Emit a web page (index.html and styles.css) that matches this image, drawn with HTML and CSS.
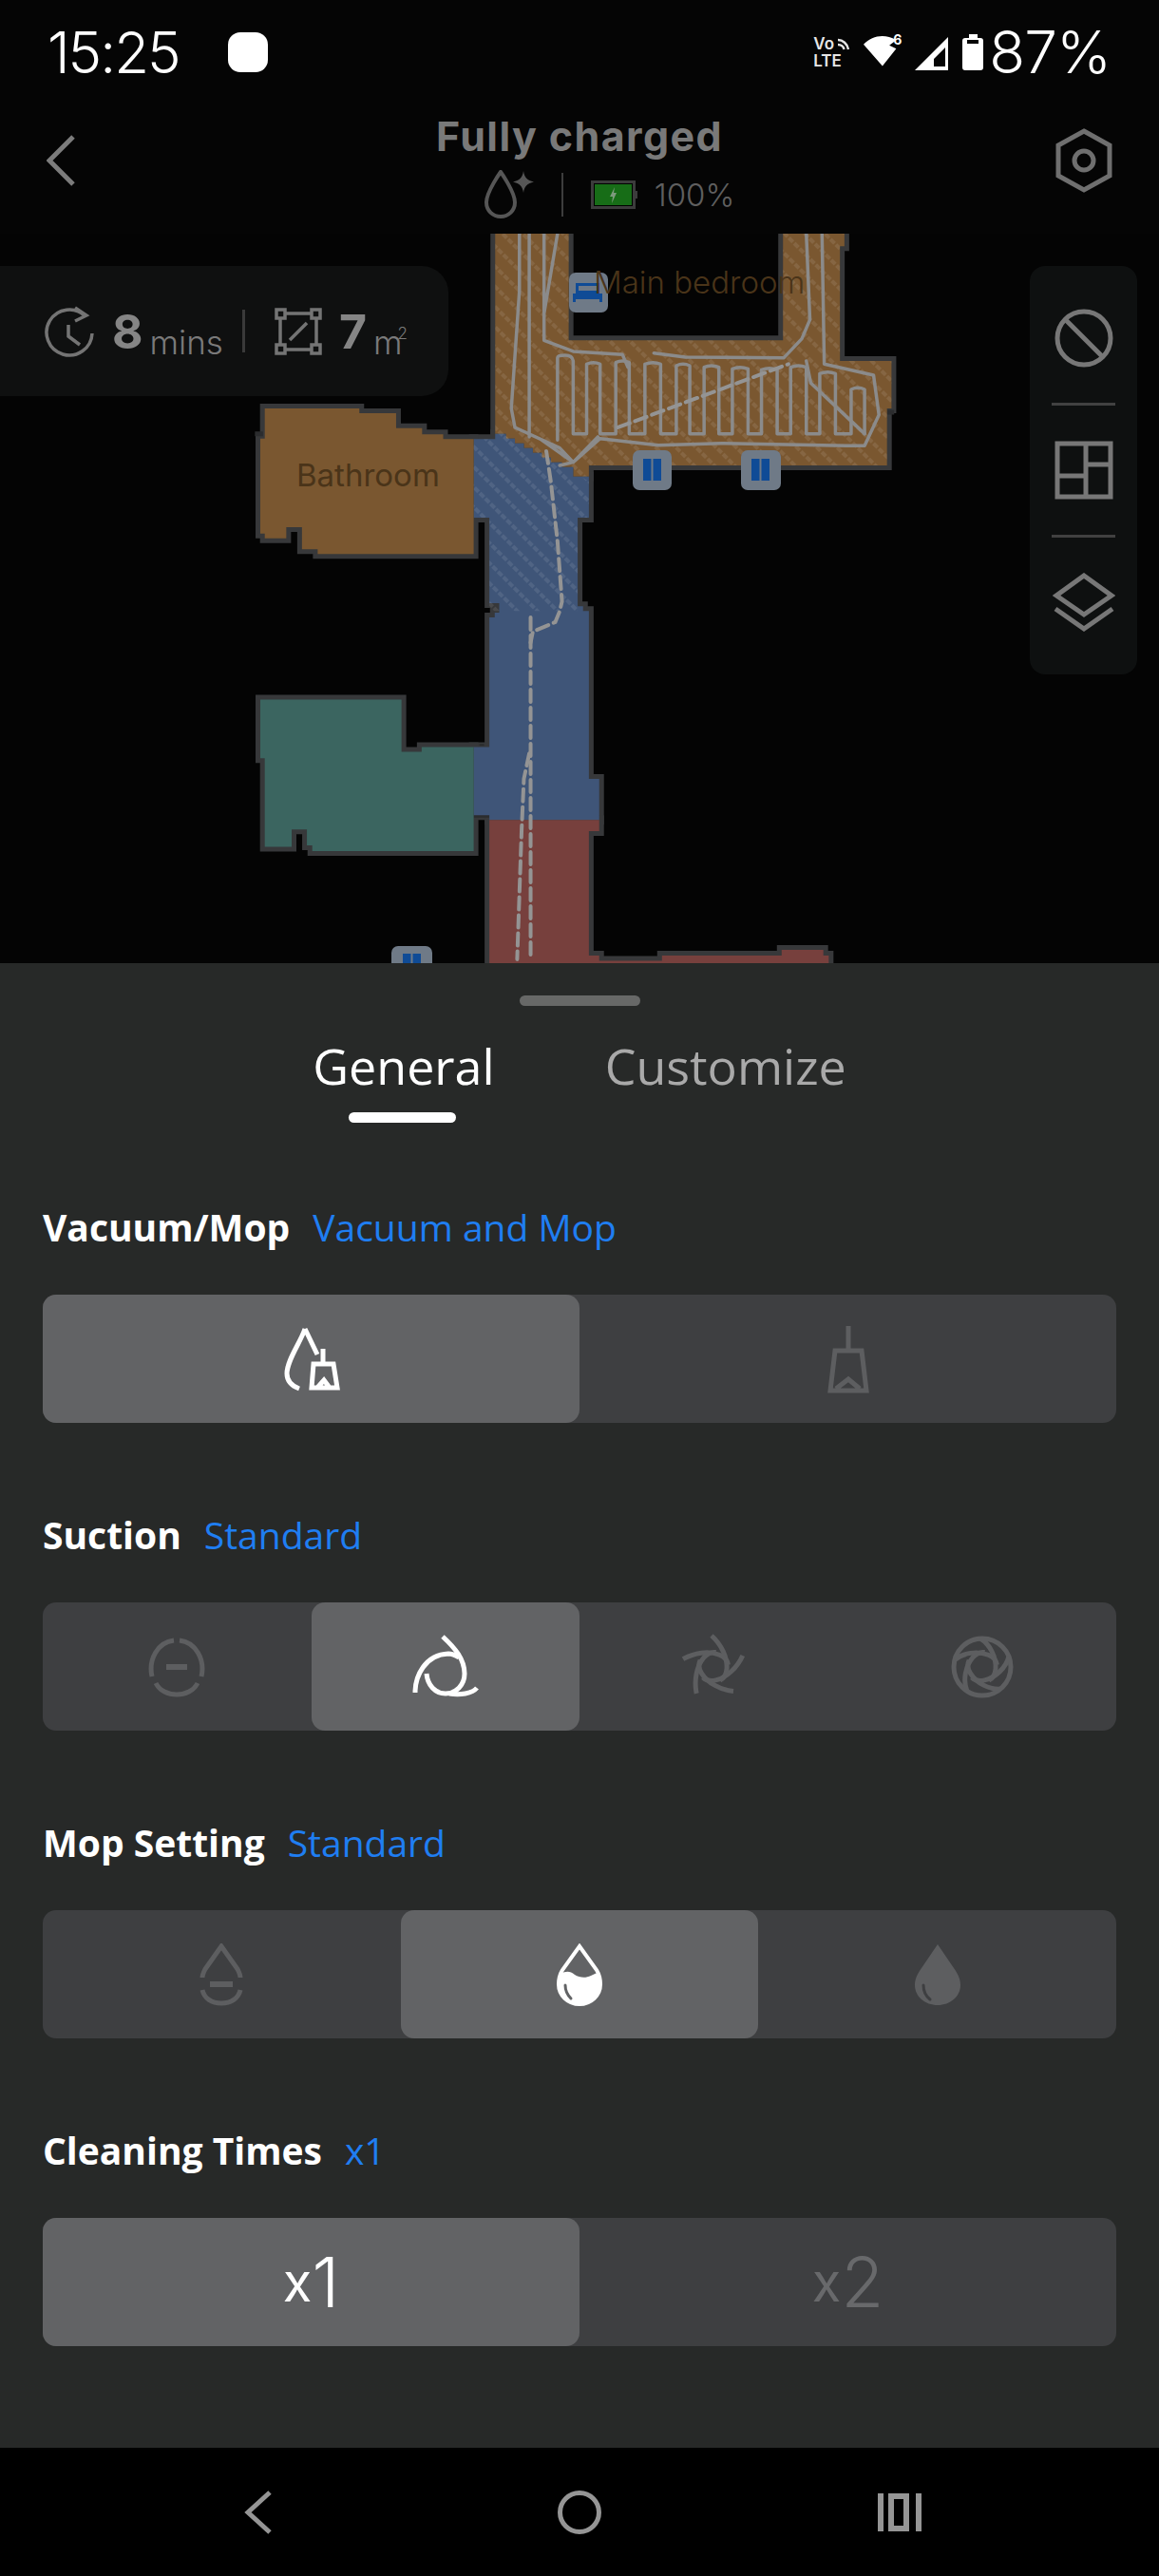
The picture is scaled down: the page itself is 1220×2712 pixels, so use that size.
FILE: index.html
```html
<!DOCTYPE html>
<html lang="en">
<head>
<meta charset="utf-8">
<title>Clean settings</title>
<link rel="stylesheet" href="styles.css">
</head>
<body>
<div class="screen">
  <div class="status">
    <div class="status-left">
      <span class="clock">15:25</span>
      <span class="notif"></span>
    </div>
    <div class="status-right">
      <div class="volte">
        <span class="vo">Vo</span>
        <svg class="volte-waves" viewBox="0 0 14 14"><path d="M1 3 C6 3 11 7 12 13 M1 8 C4 8 7 10 7.5 13"/></svg>
        <span class="lte">LTE</span>
      </div>
      <svg class="wifi" viewBox="0 0 42 38"><path class="solid" d="M0 11 C10 1 24 -2 38 6 L30 12 L38 16 L22 36 Z"/></svg>
      <span class="wifi6">6</span>
      <svg class="signal" viewBox="0 0 36 35"><path class="solid" fill-rule="evenodd" d="M0 35 L35 0 V35 Z M20 31 H32 V11 L20 23 Z"/></svg>
      <svg class="battery" viewBox="0 0 22 38"><path class="solid" fill-rule="evenodd" d="M7 0 H16 V4 H19 Q22 4 22 7 V35 Q22 38 19 38 H3 Q0 38 0 35 V7 Q0 4 3 4 H7 Z M5 6 V10 H17 V6 Z"/></svg>
      <span class="pct">87%</span>
    </div>
  </div>

  <header class="header">
    <svg class="back" viewBox="0 0 30 54"><path d="M28 2 L3 27 L28 52"/></svg>
    <div class="header-mid">
      <div class="title">Fully charged</div>
      <div class="sub">
        <svg class="drop-spark" viewBox="0 0 54 52">
          <path class="dim-stroke" d="M18 2 C18 2 3 23 3 34 C3 43 10 49 18 49 C26 49 33 43 33 34 C33 23 18 2 18 2 Z"/>
          <path class="dim-fill" d="M42 1 C43 8 46 11 53 12.500 C46 14 43 17 42 24 C41 17 38 14 31 12.500 C38 11 41 8 42 1 Z"/>
        </svg>
        <span class="sub-div"></span>
        <svg class="batt-green" viewBox="0 0 50 30">
          <rect class="batt-shell" x="1.500" y="1.500" width="44" height="27"/>
          <rect class="batt-level" x="4" y="4" width="39" height="22"/>
          <path class="batt-bolt" d="M25 7 L20 17 H23 L22 24 L27 13 H24 Z"/>
          <rect class="batt-nub" x="46" y="11" width="3" height="8"/>
        </svg>
        <span class="sub-pct">100%</span>
      </div>
    </div>
    <svg class="hex" viewBox="0 0 60 68">
      <path d="M30 3 L57 18 V50 L30 65 L3 50 V18 Z"/>
      <circle cx="30" cy="34" r="10"/>
    </svg>
  </header>

  <main class="map">
    <svg class="map-art" viewBox="0 246 1220 768">
      <defs>
        <pattern id="clean" patternUnits="userSpaceOnUse" width="8" height="15" patternTransform="scale(2.119 3) rotate(45)">
          <rect class="clean-dot" x="0" y="0" width="6" height="4"/>
        </pattern>
        <path id="r-orange" class="room-shape" d="M596 -20 V680 H620 V695 H640 V710 H660 V725 H680 V740 H700 V755 H720 V770 H745 V785 H770 V815 H805 V780 H1470 V600 H1480 V450 H1365 V88 H1375 V-20 H1238 V385 H760 V-20 Z"/>
        <path id="r-blue" class="room-shape" d="M548 697 H596 V680 H620 V695 H640 V710 H660 V725 H680 V740 H700 V755 H720 V770 H745 V785 H770 V815 H805 V945 H780 V1225 H792 V1240 H805 V1770 H828 V1900 H583 V1885 H548 V1670 H583 V1260 H595 V1245 H605 V1215 H583 V945 H548 Z"/>
        <path id="r-bath" class="room-shape" d="M82 600 H293 V615 H375 V662 H433 V682 H480 V697 H548 V1060 H200 V1045 H165 V975 H130 V1010 H82 V995 H72 V695 H82 Z"/>
        <path id="r-teal" class="room-shape" d="M72 1520 H387 V1685 H432 V1670 H548 V1998 H188 V1980 H176 V1930 H142 V1985 H82 V1705 H72 Z"/>
        <path id="r-red" class="room-shape" d="M583 1900 H828 V1935 H805 V2328 H828 V2345 H968 V2328 H1235 V2310 H1328 V2328 H1340 V2380 H583 Z"/>
      </defs>
      <g transform="translate(240 230) scale(.4719 .3333)">
        <use class="wall" href="#r-orange"/>
        <use class="wall" href="#r-blue"/>
        <use class="wall" href="#r-bath"/>
        <use class="wall" href="#r-teal"/>
        <use class="wall" href="#r-red"/>
        <path class="wall-bit" d="M754 320 V360 M1206 385 V415 M1470 612 H1486 M60 680 H78 M566 1660 V1666 M548 1885 H583"/>
        <use class="room-orange" href="#r-orange"/>
        <use class="room-blue" href="#r-blue"/>
        <use class="room-bath" href="#r-bath"/>
        <use class="room-teal" href="#r-teal"/>
        <use class="room-red" href="#r-red"/>
        <use class="room-clean" href="#r-orange"/>
        <path class="room-clean" d="M548 697 H596 V680 H620 L805 830 V945 H780 V1240 H583 V945 H548 Z"/>
        <path class="track" d="M650 48 V230 L632 600 L640 660 L740 725 L770 770 L825 690 M672 48 V690 M705 48 V380 M735 48 L705 300 V385 L770 420 L880 430 L892 470 M950 425 L1020 438 L1240 440 L1280 380 L1298 320 L1290 48 M1325 48 L1330 460 L1440 495 L1452 620 L1420 718 H1380 L1100 710 L960 716 L830 695 L770 770 L740 780 M1290 450 L1300 520 L1420 680 M700 700 L770 770"/>
        <path class="track" d="M735 700 V440 Q735 432 752 432 Q768 432 770 450 V680 H800 V460 Q815 450 830 460 V680 H865 V455 Q880 445 895 455 V680 H930 V460 Q948 450 965 460 V680 H1000 V465 Q1015 455 1030 465 V680 H1062 V470 Q1078 460 1095 470 V680 H1125 V475 Q1142 465 1160 475 V680 H1190 V478 Q1208 468 1225 478 V680 H1255 V470 Q1272 460 1290 470 V680 H1320 V490 Q1338 480 1355 490 V680 H1390 V540 Q1405 530 1420 540 V680"/>
        <path class="track-dash" d="M870 660 L1250 460"/>
        <path class="track-dash" d="M710 735 L720 830 L735 1020 L745 1210 L740 1240 L730 1275 L680 1305 L675 1340"/>
        <path class="track-dash" d="M675 1260 V2340"/>
        <path class="track-dash" d="M672 1690 L660 1770 L655 1930 L645 2340"/>
      </g>
      <rect class="marker" x="599" y="287" width="41" height="42" rx="7"/>
      <path class="marker-ico" fill-rule="evenodd" d="M603 318 V309 H606 V298 H631 V309 H634 V318 H631 V315 H606 V318 Z M609 301 V306 H628 V301 Z"/>
      <rect class="marker" x="666" y="474" width="41" height="42" rx="7"/>
      <path class="marker-ico" d="M677 483 H685.500 V506 H677 Z M687.500 483 H696 V506 H687.500 Z"/>
      <rect class="marker" x="780" y="474" width="42" height="42" rx="7"/>
      <path class="marker-ico" d="M791 483 H799.500 V506 H791 Z M801.500 483 H810 V506 H801.500 Z"/>
      <rect class="marker" x="412" y="996" width="43" height="42" rx="7"/>
      <path class="marker-ico" d="M424 1004 H432.500 V1030 H424 Z M434.500 1004 H443 V1030 H434.500 Z"/>
      <text class="room-label label-main" x="625" y="309">Main bedroom</text>
      <text class="room-label label-bath" x="312" y="512">Bathroom</text>
    </svg>

    <div class="stats">
      <svg class="stat-ico" viewBox="0 0 54 56">
        <path d="M44 12 A24 24 0 1 0 51 30"/>
        <path d="M33 3 L45 11 L33 17 M26 21 V33 L38 42"/>
      </svg>
      <span class="stat-num">8</span>
      <span class="stat-unit">mins</span>
      <span class="stat-div"></span>
      <svg class="stat-ico area" viewBox="0 0 50 50">
        <rect class="thin" x="6" y="6" width="38" height="38"/>
        <path class="thin" d="M16 34 L34 16"/>
        <rect class="corner" x="2" y="2" width="9" height="9"/>
        <rect class="corner" x="39" y="2" width="9" height="9"/>
        <rect class="corner" x="2" y="39" width="9" height="9"/>
        <rect class="corner" x="39" y="39" width="9" height="9"/>
      </svg>
      <span class="stat-num">7</span>
      <span class="stat-unit">m<sup class="sq">2</sup></span>
    </div>

    <div class="tools">
      <svg class="tool" viewBox="0 0 62 62"><circle cx="31" cy="31" r="28"/><path d="M12 12 L50 50"/></svg>
      <span class="tool-div"></span>
      <svg class="tool" viewBox="0 0 62 62"><path d="M3 3 H59 V59 H3 Z M33 3 V59 M3 37 H33 M33 25 H59"/></svg>
      <span class="tool-div"></span>
      <svg class="tool" viewBox="0 0 66 62"><path d="M33 3 L62 24 L33 44 L4 24 Z M3 38 L33 59 L63 38"/></svg>
    </div>
  </main>

  <section class="panel">
    <div class="handle"></div>
    <div class="tabs">
      <div class="tab active">General<span class="tab-bar"></span></div>
      <div class="tab">Customize</div>
    </div>

    <div class="group">
      <div class="label">Vacuum/Mop<span class="value">Vacuum and Mop</span></div>
      <div class="seg">
        <div class="opt on">
          <svg class="ico-white" width="60" height="70" viewBox="0 0 60 70">
            <path d="M23 3 C18 18 4 36 4 50 C4 58 9 63 17 66 M23 3 L36 30"/>
            <path d="M42 24 V40 M32 40 H53 L57 65 H30 Z M36 65 L43 57 L49 65"/>
          </svg>
        </div>
        <div class="opt">
          <svg class="ico-dim" width="50" height="74" viewBox="0 0 50 74">
            <path d="M25 2 V28 M11 28 H39 L44 70 H6 Z M12 68 L25 58 L37 68"/>
          </svg>
        </div>
      </div>
    </div>

    <div class="group">
      <div class="label">Suction<span class="value">Standard</span></div>
      <div class="seg">
        <div class="opt">
          <svg class="ico-dim" width="70" height="70" viewBox="-35 -35 70 70">
            <path d="M-3 -28 C-20 -26 -30 -8 -26 10 M3 -28 C20 -26 30 -8 26 10 M-22 17 C-14 33 14 33 22 17"/>
            <rect class="ico-fill" x="-11" y="-3" width="22" height="6"/>
          </svg>
        </div>
        <div class="opt on">
          <svg class="ico-white" width="80" height="80" viewBox="-40 -40 80 80">
            <path d="M-3 -32 C10 -20 20 -8 20 7 C20 19 11 28 0 28 C-11 28 -19 19 -20 7"/>
            <path d="M-32 27 C-32 10 -22 -13 3 -14 C8 -14 11 -12 14 -10"/>
            <path d="M33 22 C28 28 15 30 4 28"/>
          </svg>
        </div>
        <div class="opt">
          <svg class="ico-dim" width="80" height="80" viewBox="-40 -40 80 80">
            <path d="M-2 -33 C8 -24 15 -10 14 2 C13.500 8 11 12 7 14"/>
            <path transform="rotate(72)" d="M-2 -33 C8 -24 15 -10 14 2 C13.500 8 11 12 7 14"/>
            <path transform="rotate(144)" d="M-2 -33 C8 -24 15 -10 14 2 C13.500 8 11 12 7 14"/>
            <path transform="rotate(216)" d="M-2 -33 C8 -24 15 -10 14 2 C13.500 8 11 12 7 14"/>
            <path transform="rotate(288)" d="M-2 -33 C8 -24 15 -10 14 2 C13.500 8 11 12 7 14"/>
          </svg>
        </div>
        <div class="opt">
          <svg class="ico-dim" width="80" height="80" viewBox="-40 -40 80 80">
            <circle r="30"/>
            <path d="M-2 -30 C8 -24 15 -10 14 2 C13.500 8 11 12 7 14"/>
            <path transform="rotate(72)" d="M-2 -30 C8 -24 15 -10 14 2 C13.500 8 11 12 7 14"/>
            <path transform="rotate(144)" d="M-2 -30 C8 -24 15 -10 14 2 C13.500 8 11 12 7 14"/>
            <path transform="rotate(216)" d="M-2 -30 C8 -24 15 -10 14 2 C13.500 8 11 12 7 14"/>
            <path transform="rotate(288)" d="M-2 -30 C8 -24 15 -10 14 2 C13.500 8 11 12 7 14"/>
          </svg>
        </div>
      </div>
    </div>

    <div class="group">
      <div class="label">Mop Setting<span class="value">Standard</span></div>
      <div class="seg">
        <div class="opt">
          <svg class="ico-dim thin-ico" width="48" height="66" viewBox="0 0 48 66">
            <path d="M4 36 C4 34 5 31 7 27 L24 3 L41 27 C43 31 44 34 44 36 M4 49 C6 58 14 63 24 63 C34 63 42 58 44 49"/>
            <rect class="ico-fill" x="12" y="40" width="24" height="6"/>
          </svg>
        </div>
        <div class="opt on">
          <svg width="48" height="66" viewBox="0 0 48 66">
            <path class="drop-line" d="M24 3 L42 28 C45 33 46 38 46 43 C46 55 36 64 24 64 C12 64 2 55 2 43 C2 38 3 33 6 28 Z"/>
            <path class="drop-solid" d="M4 32 C10 29 14 29 19 33 C24 36 30 37 36 34 C40 32 42 31 44 31 C47 36 47 40 47 43 C47 56 36 65 24 65 C12 65 1 56 1 43 C1 39 2 36 4 32 Z"/>
            <path class="drop-shine" d="M9 44 C9 50 11 54 15 58"/>
          </svg>
        </div>
        <div class="opt">
          <svg width="50" height="66" viewBox="0 0 50 66">
            <path class="drop-dim" d="M25 1 L42 26 C47 33 49 38 49 44 C49 56 38 65 25 65 C12 65 1 56 1 44 C1 38 3 33 8 26 Z"/>
            <path class="drop-shine-dark" d="M10 44 C10 50 12 55 17 59"/>
          </svg>
        </div>
      </div>
    </div>

    <div class="group">
      <div class="label">Cleaning Times<span class="value">x1</span></div>
      <div class="seg">
        <div class="opt on times"><span class="times-x">x</span>1</div>
        <div class="opt times"><span class="times-x">x</span>2</div>
      </div>
    </div>
  </section>

  <nav class="navbar">
    <svg class="nav-back" viewBox="0 0 30 46"><path d="M27 2 L4 23 L27 44"/></svg>
    <svg class="nav-home" viewBox="0 0 46 46"><circle cx="23" cy="23" r="20.500"/></svg>
    <svg class="nav-recent" viewBox="0 0 46 40"><path class="solid-grey" fill-rule="evenodd" d="M0 0 H6 V40 H0 Z M40 0 H46 V40 H40 Z M11 0 H33 V40 H11 Z M17 6 V34 H27 V6 Z"/></svg>
  </nav>
</div>
</body>
</html>
```
FILE: styles.css
```css
* { box-sizing: border-box; }
html, body { margin: 0; padding: 0; background: #000; }
svg { display: block; flex: none; }

.screen {
  width: 1220px;
  height: 2712px;
  display: flex;
  flex-direction: column;
  overflow: hidden;
  background: #050505;
  font-family: "Open Sans", sans-serif;
}

/* status bar */
.status {
  height: 110px;
  flex: none;
  padding: 20px 51px 0 50px;
  display: flex;
  justify-content: space-between;
  align-items: flex-start;
  color: #fff;
  font-family: Inter, sans-serif;
  font-weight: 300;
}
.status-left { display: flex; align-items: center; gap: 51px; }
.clock { font-size: 60px; line-height: 70px; letter-spacing: -2px; }
.notif { width: 42px; height: 42px; border-radius: 13px; background: #fff; }
.status-right { display: flex; align-items: center; position: relative; height: 70px; }
.volte { width: 40px; height: 36px; position: relative; font-size: 17px; font-weight: 600; line-height: 17px; color: #e6e6e6; margin-right: 13px; }
.vo { position: absolute; left: 0; top: 1px; }
.lte { position: absolute; left: 0; top: 19px; }
.volte-waves { position: absolute; left: 25px; top: 2px; width: 14px; height: 14px; fill: none; stroke: #e6e6e6; stroke-width: 2.500; }
.wifi { width: 38px; height: 36px; margin-top: -2px; }
.solid { fill: #fff; }
.wifi6 { font-size: 14px; font-weight: 700; width: 17px; margin-top: -26px; margin-left: -7px; line-height: 14px; }
.signal { width: 36px; height: 35px; margin-left: 6px; margin-top: 2px; }
.battery { width: 22px; height: 38px; margin-left: 14px; }
.pct { font-size: 62px; line-height: 70px; margin-left: 6px; letter-spacing: -1px; }

/* header */
.header {
  height: 136px;
  flex: none;
  padding: 0 49px;
  display: grid;
  grid-template-columns: 60px 1fr 60px;
  align-items: start;
}
.back { width: 30px; height: 54px; margin-top: 32px; fill: none; stroke: #7c7c7c; stroke-width: 5; }
.hex { width: 60px; height: 68px; margin-top: 25px; fill: none; stroke: #6f6f6f; stroke-width: 5; }
.header-mid { display: flex; flex-direction: column; align-items: center; }
.title { font-family: Inter, sans-serif; font-weight: 700; font-size: 43px; line-height: 52px; margin-top: 7px; color: #797979; letter-spacing: 1.400px; }
.sub { display: flex; align-items: center; margin-top: 10px; margin-left: 62px; }
.drop-spark { width: 54px; height: 52px; }
.dim-stroke { fill: none; stroke: #565656; stroke-width: 4; }
.dim-fill { fill: #565656; }
.sub-div { width: 2px; height: 46px; background: #3d3d3d; margin: 0 29px 0 28px; }
.batt-green { width: 50px; height: 30px; }
.batt-shell { fill: #000; stroke: #3c3c3c; stroke-width: 3; }
.batt-level { fill: #176d17; }
.batt-bolt { fill: #7d9a7d; }
.batt-nub { fill: #3c3c3c; }
.sub-pct { font-family: Inter, sans-serif; font-weight: 300; font-size: 33px; line-height: 40px; color: #5f5f5f; margin-left: 17px; }

/* map */
.map { position: relative; height: 768px; flex: none; background: #040404; }
.map-art { width: 1220px; height: 768px; }
.room-shape { vector-effect: non-scaling-stroke; }
.wall { fill: #37383a; stroke: #37383a; stroke-width: 10; }
.wall-bit { fill: none; stroke: #2b2c2e; stroke-width: 5; vector-effect: non-scaling-stroke; }
.room-orange, .room-bath { fill: #7a5730; }
.room-blue { fill: #3f5578; }
.room-teal { fill: #3b6560; }
.room-red { fill: #77403d; }
.room-clean { fill: url(#clean); }
.clean-dot { fill: #fff; fill-opacity: .09; }
.track { fill: none; stroke: #8b8b8b; stroke-width: 3.500; stroke-linejoin: round; stroke-linecap: round; vector-effect: non-scaling-stroke; }
.track-dash { fill: none; stroke: #949494; stroke-width: 4; stroke-dasharray: 13 6; stroke-linecap: round; vector-effect: non-scaling-stroke; }
.marker { fill: #6f7a87; }
.marker-ico { fill: #0f4b96; }
.room-label { fill: #4a3419; font-family: Inter, sans-serif; font-weight: 300; }
.label-main { font-size: 33px; }
.label-bath { font-size: 33px; font-weight: 400; }

.stats {
  position: absolute;
  left: 0;
  top: 34px;
  width: 472px;
  height: 137px;
  padding-left: 46px;
  display: flex;
  align-items: center;
  background: #0f1010;
  border-radius: 0 28px 28px 0;
  color: #808080;
  font-family: Inter, sans-serif;
}
.stat-ico { width: 54px; height: 56px; fill: none; stroke: #747474; stroke-width: 3.500; }
.stat-ico.area { width: 50px; height: 50px; }
.thin { fill: none; stroke: #747474; stroke-width: 3.500; }
.corner { fill: #0f1010; stroke: #747474; stroke-width: 3.500; }
.stat-num { font-weight: 700; font-size: 50px; line-height: 60px; margin-left: 18px; color: #858585; }
.stat-unit { font-weight: 300; font-size: 35px; line-height: 40px; margin-left: 7px; margin-top: 22px; color: #7a7a7a; }
.sq { font-size: 17px; line-height: 0; vertical-align: 16px; margin-left: -5px; }
.stat-div { width: 3px; height: 45px; background: #3a3a3a; margin: 0 31px 0 20px; }

.tools {
  position: absolute;
  left: 1084px;
  top: 34px;
  width: 113px;
  height: 430px;
  padding-top: 45px;
  display: flex;
  flex-direction: column;
  align-items: center;
  gap: 37px;
  background: #0e1010;
  border-radius: 16px;
}
.tool { width: 66px; height: 62px; fill: none; stroke: #777; stroke-width: 5; }
.tool-div { width: 67px; height: 3px; background: #414141; flex: none; }

/* bottom panel */
.panel {
  flex: 1;
  padding: 34px 45px 0;
  background: #272928;
  display: flex;
  flex-direction: column;
}
.handle { width: 127px; height: 11px; margin: 0 auto; border-radius: 6px; background: #676867; }
.tabs { display: flex; justify-content: center; gap: 116px; margin-top: 29px; height: 94px; }
.tab { position: relative; font-size: 52px; line-height: 68px; font-weight: 500; color: #a9a9a9; }
.tab.active { color: #fff; }
.tab-bar { position: absolute; left: 38px; top: 83px; width: 113px; height: 11px; border-radius: 6px; background: #fff; }

.group { margin-top: 85px; }
.group + .group { margin-top: 93px; }
.label { height: 50px; margin-bottom: 46px; font-size: 39px; line-height: 50px; font-weight: 700; color: #fff; display: flex; }
.value { margin-left: 24px; color: #1f7ef2; font-weight: 400; }
.seg { height: 135px; display: flex; background: #3e3f41; border-radius: 14px; }
.opt { flex: 1 1 0; display: flex; align-items: center; justify-content: center; border-radius: 14px; }
.opt.on { background: #626365; }
.ico-white { fill: none; stroke: #fff; stroke-width: 5; }
.ico-dim { fill: none; stroke: #5d5e60; stroke-width: 5; }
.ico-fill { fill: #5d5e60; stroke: none; }
.drop-line { fill: none; stroke: #fff; stroke-width: 4; }
.drop-solid { fill: #fff; }
.drop-shine { fill: none; stroke: #626365; stroke-width: 3; stroke-linecap: round; }
.drop-dim { fill: #5d5e60; }
.drop-shine-dark { fill: none; stroke: #3e3f41; stroke-width: 3; stroke-linecap: round; }
.times { font-family: Inter, sans-serif; font-weight: 300; font-size: 73px; color: #68696b; }
.times.on { color: #fff; }
.times-x { font-size: 56px; font-weight: 400; }

/* navigation bar */
.navbar {
  height: 135px;
  flex: none;
  background: #000;
  display: flex;
  align-items: center;
  position: relative;
  padding: 0 0 0 257px;
}
.nav-back { width: 30px; height: 46px; fill: none; stroke: #959595; stroke-width: 5; }
.nav-home { width: 46px; height: 46px; margin-left: 300px; fill: none; stroke: #959595; stroke-width: 5; }
.nav-recent { width: 46px; height: 40px; margin-left: 291px; }
.solid-grey { fill: #959595; }
```
